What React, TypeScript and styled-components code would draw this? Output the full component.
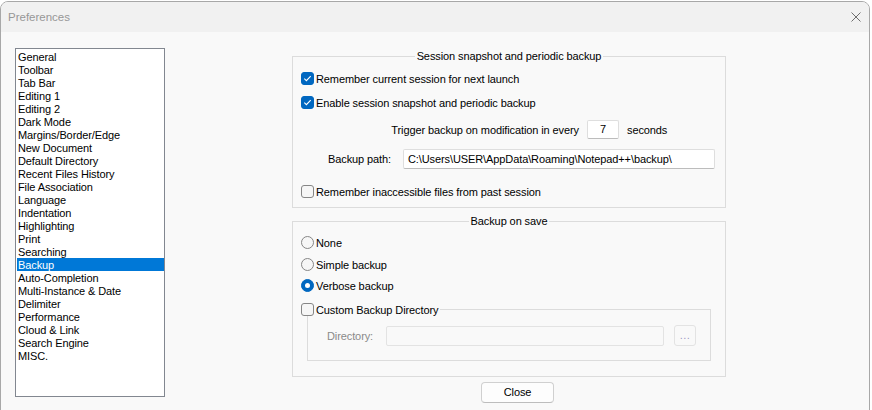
import React from 'react';
import styled, { createGlobalStyle } from 'styled-components';

const GlobalStyle = createGlobalStyle`
  html, body {
    margin: 0;
    padding: 0;
    background: #ffffff;
    overflow: hidden;
  }
  body {
    font-family: "Liberation Sans", Arial, sans-serif;
    font-size: 11px;
    letter-spacing: -0.1px;
    color: #000;
  }
  * {
    box-sizing: border-box;
  }
`;

const Window = styled.div`
  margin-top: 1px;
  width: 870px;
  height: 420px;
  border: 1px solid #a8a8a8;
  border-radius: 8px 8px 0 0;
  background: #f9f9f9;
  overflow: hidden;
  display: flex;
  flex-direction: column;
`;

const TitleBar = styled.div`
  height: 30px;
  flex: 0 0 30px;
  background: #f1f1f1;
  display: flex;
  align-items: center;
  justify-content: space-between;
  padding: 0 8px 0 7px;
`;

const Title = styled.span`
  font-size: 11.5px;
  letter-spacing: 0;
  color: #979797;
`;

const CloseX = styled.svg`
  width: 10px;
  height: 10px;
  display: block;
`;

const Body = styled.div`
  display: flex;
  align-items: flex-start;
  padding: 16px 0 0 14px;
`;

const ListBox = styled.div`
  width: 150px;
  height: 349px;
  border: 1px solid #828790;
  background: #ffffff;
  padding: 1px 0 0 1px;
  display: flex;
  flex-direction: column;
`;

const ListItem = styled.div<{ $selected?: boolean }>`
  height: 13px;
  line-height: 14px;
  padding-left: 1px;
  white-space: nowrap;
  background: ${({ $selected }) => ($selected ? '#0078d7' : 'transparent')};
  color: ${({ $selected }) => ($selected ? '#ffffff' : '#000000')};
`;

const RightPane = styled.div`
  margin: 1px 0 0 127px;
  width: 434px;
  display: flex;
  flex-direction: column;
`;

const GroupBox = styled.fieldset<{ $mt?: number; $pb: number }>`
  margin: ${({ $mt }) => $mt || 0}px 0 0 0;
  padding: 0 0 ${({ $pb }) => $pb}px 0;
  min-width: 0;
  width: 100%;
  border: 1px solid #dcdcdc;
  display: flex;
  flex-direction: column;
`;

const Legend = styled.legend`
  margin: 0 auto;
  padding: 0 2px;
  height: 14px;
  line-height: 15px;
`;

const Row = styled.div<{ $mt: number; $pl?: number; $h?: number }>`
  margin-top: ${({ $mt }) => $mt}px;
  padding-left: ${({ $pl }) => $pl ?? 8}px;
  height: ${({ $h }) => $h ?? 13}px;
  display: flex;
  align-items: center;
  white-space: nowrap;
`;

const Choice = styled.label`
  display: inline-flex;
  align-items: center;
  gap: 2px;
  height: 13px;
  line-height: 14px;
`;

const Box = styled.span<{ $checked?: boolean }>`
  width: 13px;
  height: 13px;
  flex: 0 0 13px;
  border-radius: 3px;
  border: 1px solid ${({ $checked }) => ($checked ? '#0067c0' : '#868686')};
  background: ${({ $checked }) => ($checked ? '#0067c0' : '#f6f6f6')};
  display: flex;
  align-items: center;
  justify-content: center;
`;

const Radio = styled.span<{ $checked?: boolean }>`
  width: 13px;
  height: 13px;
  flex: 0 0 13px;
  border-radius: 50%;
  border: 1px solid ${({ $checked }) => ($checked ? '#0067c0' : '#868686')};
  background: ${({ $checked }) => ($checked ? '#0067c0' : '#f6f6f6')};
  display: flex;
  align-items: center;
  justify-content: center;

  &::after {
    content: '';
    display: ${({ $checked }) => ($checked ? 'block' : 'none')};
    width: 5px;
    height: 5px;
    border-radius: 50%;
    background: #ffffff;
  }
`;

const FieldLabel = styled.span<{ $w: number; $gap: number; $muted?: boolean }>`
  flex: 0 0 ${({ $w }) => $w}px;
  margin-right: ${({ $gap }) => $gap}px;
  text-align: ${({ $muted }) => ($muted ? 'left' : 'right')};
  color: ${({ $muted }) => ($muted ? '#8a8a8a' : '#000')};
`;

const TextInput = styled.div<{ $w: number; $h: number; $center?: boolean; $disabled?: boolean }>`
  width: ${({ $w }) => $w}px;
  height: ${({ $h }) => $h}px;
  line-height: ${({ $h }) => $h - 2}px;
  padding-left: ${({ $center }) => ($center ? 0 : 4)}px;
  text-align: ${({ $center }) => ($center ? 'center' : 'left')};
  border: 1px solid ${({ $disabled }) => ($disabled ? '#e3e3e3' : '#dedede')};
  border-bottom-color: ${({ $disabled }) => ($disabled ? '#e3e3e3' : '#bcbcbc')};
  border-radius: 2px;
  background: ${({ $disabled }) => ($disabled ? '#f9f9f9' : '#ffffff')};
  overflow: hidden;
  white-space: nowrap;
`;

const Unit = styled.span`
  margin-left: 8px;
`;

const InnerGroup = styled.fieldset`
  margin: 11px 0 0 14px;
  padding: 0 0 14px 0;
  width: 404px;
  min-width: 0;
  border: 1px solid #dcdcdc;
  display: flex;
  flex-direction: column;
`;

const InnerLegend = styled.legend`
  margin-left: -7px;
  padding: 0 2px 0 0;
  height: 13px;
  line-height: 13px;
`;

const BrowseButton = styled.div`
  margin-left: 10px;
  width: 22px;
  height: 21px;
  border: 1px solid #e3e3e3;
  border-radius: 3px;
  background: #f9f9f9;
  color: #9d97c4;
  font-size: 11px;
  line-height: 19px;
  text-align: center;
  letter-spacing: 0.5px;
`;

const CloseButton = styled.div`
  margin: 5px 0 0 189px;
  width: 73px;
  height: 21px;
  border: 1px solid #d0d0d0;
  border-bottom-color: #bdbdbd;
  border-radius: 4px;
  background: #fdfdfd;
  line-height: 19px;
  text-align: center;
`;

const Check = () => (
  <svg width="9" height="9" viewBox="0 0 9 9">
    <path d="M1.3 4.6 L3.4 6.6 L7.7 2.1" fill="none" stroke="#ffffff" strokeWidth="1.1" />
  </svg>
);

const CheckBox = (props: { checked?: boolean; children: React.ReactNode }) => (
  <Choice>
    <Box $checked={props.checked}>{props.checked && <Check />}</Box>
    <span>{props.children}</span>
  </Choice>
);

const RadioOption = (props: { checked?: boolean; children: React.ReactNode }) => (
  <Choice>
    <Radio $checked={props.checked} />
    <span>{props.children}</span>
  </Choice>
);

const categories = [
  'General',
  'Toolbar',
  'Tab Bar',
  'Editing 1',
  'Editing 2',
  'Dark Mode',
  'Margins/Border/Edge',
  'New Document',
  'Default Directory',
  'Recent Files History',
  'File Association',
  'Language',
  'Indentation',
  'Highlighting',
  'Print',
  'Searching',
  'Backup',
  'Auto-Completion',
  'Multi-Instance & Date',
  'Delimiter',
  'Performance',
  'Cloud & Link',
  'Search Engine',
  'MISC.',
];

export default function App() {
  return (
    <>
      <GlobalStyle />
      <Window>
        <TitleBar>
          <Title>Preferences</Title>
          <CloseX viewBox="0 0 10 10">
            <path d="M0.5 0.5 L9.5 9.5 M9.5 0.5 L0.5 9.5" stroke="#6e6e6e" strokeWidth="1" />
          </CloseX>
        </TitleBar>
        <Body>
          <ListBox>
            {categories.map((name) => (
              <ListItem key={name} $selected={name === 'Backup'}>
                {name}
              </ListItem>
            ))}
          </ListBox>
          <RightPane>
            <GroupBox $pb={9}>
              <Legend>Session snapshot and periodic backup</Legend>
              <Row $mt={9}>
                <CheckBox checked>Remember current session for next launch</CheckBox>
              </Row>
              <Row $mt={11}>
                <CheckBox checked>Enable session snapshot and periodic backup</CheckBox>
              </Row>
              <Row $mt={11} $pl={0} $h={19}>
                <FieldLabel $w={286} $gap={8}>
                  Trigger backup on modification in every
                </FieldLabel>
                <TextInput $w={32} $h={19} $center>
                  7
                </TextInput>
                <Unit>seconds</Unit>
              </Row>
              <Row $mt={10} $pl={0} $h={20}>
                <FieldLabel $w={98} $gap={12}>
                  Backup path:
                </FieldLabel>
                <TextInput $w={312} $h={20}>
                  C:\Users\USER\AppData\Roaming\Notepad++\backup\
                </TextInput>
              </Row>
              <Row $mt={16}>
                <CheckBox>Remember inaccessible files from past session</CheckBox>
              </Row>
            </GroupBox>

            <GroupBox $mt={6} $pb={15}>
              <Legend>Backup on save</Legend>
              <Row $mt={8}>
                <RadioOption>None</RadioOption>
              </Row>
              <Row $mt={9}>
                <RadioOption>Simple backup</RadioOption>
              </Row>
              <Row $mt={8}>
                <RadioOption checked>Verbose backup</RadioOption>
              </Row>
              <InnerGroup>
                <InnerLegend>
                  <CheckBox>Custom Backup Directory</CheckBox>
                </InnerLegend>
                <Row $mt={9} $pl={19} $h={21}>
                  <FieldLabel $w={59} $gap={0} $muted>
                    Directory:
                  </FieldLabel>
                  <TextInput $w={278} $h={20} $disabled />
                  <BrowseButton>...</BrowseButton>
                </Row>
              </InnerGroup>
            </GroupBox>

            <CloseButton>Close</CloseButton>
          </RightPane>
        </Body>
      </Window>
    </>
  );
}
